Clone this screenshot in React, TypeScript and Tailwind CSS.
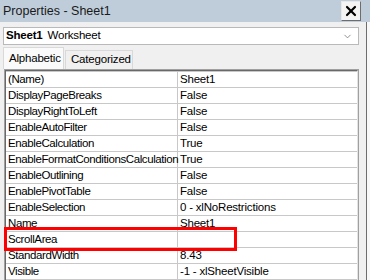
import { X, ChevronDown } from "lucide-react";

const rows: [string, string][] = [
  ["(Name)", "Sheet1"],
  ["DisplayPageBreaks", "False"],
  ["DisplayRightToLeft", "False"],
  ["EnableAutoFilter", "False"],
  ["EnableCalculation", "True"],
  ["EnableFormatConditionsCalculation", "True"],
  ["EnableOutlining", "False"],
  ["EnablePivotTable", "False"],
  ["EnableSelection", "0 - xlNoRestrictions"],
  ["Name", "Sheet1"],
  ["ScrollArea", ""],
  ["StandardWidth", "8.43"],
  ["Visible", "-1 - xlSheetVisible"],
];

export default function App() {
  return (
    <div className="w-[370px] h-[280px] overflow-hidden bg-[#f0f0f0] font-['Liberation_Sans',sans-serif] text-[11.5px] tracking-[-0.2px] text-black flex flex-col">
      {/* Title bar */}
      <div className="h-[22px] shrink-0 bg-[#bfcddb] flex items-center justify-between pl-[3px] pr-[9px]">
        <span className="text-[12.5px] tracking-[0px] leading-none text-[#1a1a1a]">Properties - Sheet1</span>
        <button className="w-[20px] h-[20px] mt-[-1px] bg-[#f4f4f4] border border-t-[#e8e8e8] border-l-[#e8e8e8] border-r-[#6d6d6d] border-b-[#6d6d6d] flex items-center justify-center">
          <X className="w-[16px] h-[16px]" strokeWidth={3.2} />
        </button>
      </div>

      {/* Body */}
      <div className="flex-1 flex min-h-0">
        <div className="flex-1 flex flex-col min-w-0 pl-[3px] pr-[7px]">
          {/* Object dropdown */}
          <div className="mt-[5px] h-[18px] bg-white border border-[#b9b9b9] flex items-center pl-[2px] pr-[5px]">
            <span className="font-bold">Sheet1</span>
            <span className="ml-[5px]">Worksheet</span>
            <ChevronDown className="ml-auto w-[11px] h-[11px] text-[#606060]" strokeWidth={1.5} />
          </div>

          {/* Tabs */}
          <div className="mt-[3px] h-[21px] flex items-end">
            <div className="h-[22px] w-[61px] bg-[#fafafa] border border-b-0 border-[#d9d9d9] flex items-center pl-[5px]">
              Alphabetic
            </div>
            <div className="h-[19px] w-[68px] ml-[1px] bg-[#f0f0f0] border border-b-0 border-[#d9d9d9] flex items-center pl-[5px]">
              Categorized
            </div>
          </div>

          {/* Property grid */}
          <div className="relative flex-1 ml-[1px] border border-[#a0a0a0] bg-white">
            <div className="h-full border border-[#696969] border-r-[#e3e3e3] border-b-0">
              <div className="border-t border-[#c8c8c8]">
                {rows.map(([k, v]) => (
                  <div key={k} className="h-[16px] flex border-b border-[#c8c8c8] leading-[15px]">
                    <div className="w-[172px] shrink-0 border-r border-[#c8c8c8] pl-[2px] whitespace-nowrap tracking-[-0.4px]">{k}</div>
                    <div className="flex-1 pl-[2px] whitespace-nowrap">{v}</div>
                  </div>
                ))}
              </div>
            </div>
            <div className="absolute left-[-1px] top-[157px] w-[233px] h-[24px] border-[3px] border-[#ff0000]" />
          </div>
        </div>
        <div className="w-[4px] shrink-0 border-l border-[#6d6d6d] bg-[#f8f8f8]" />
      </div>
    </div>
  );
}
